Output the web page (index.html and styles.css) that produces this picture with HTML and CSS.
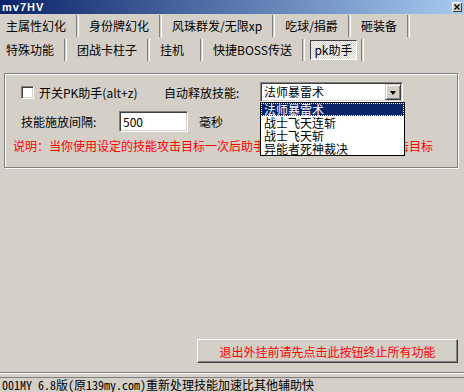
FILE: index.html
```html
<!DOCTYPE html>
<html lang="zh-CN">
<head>
    <meta charset="UTF-8">
    <title>mv7HV</title>
    <link rel="stylesheet" href="styles.css">
</head>
<body>
    <div class="window">
        <!-- Barra de titulo -->
        <div class="titlebar">
            <span class="title">mv7HV</span>
            <span class="close">
                <svg width="10" height="10" viewBox="0 0 10 10">
                    <path d="M2.5 2.5 L7.5 7.5 M7.5 2.5 L2.5 7.5" stroke="#000" stroke-width="1.4"/>
                </svg>
            </span>
        </div>

        <!-- Pestañas -->
        <div class="tabs">
            <div class="tab-row">
                <span class="tab">主属性幻化</span><i class="sep"></i>
                <span class="tab">身份牌幻化</span><i class="sep"></i>
                <span class="tab">风珠群发/无限xp</span><i class="sep"></i>
                <span class="tab">吃球/捐爵</span><i class="sep"></i>
                <span class="tab">砸装备</span><i class="sep"></i>
            </div>
            <div class="tab-row">
                <span class="tab">特殊功能</span><i class="sep"></i>
                <span class="tab">团战卡柱子</span><i class="sep"></i>
                <span class="tab tab-min">挂机</span><i class="sep"></i>
                <span class="tab">快捷BOSS传送</span><i class="sep"></i>
                <span class="tab tab-active">pk助手</span><i class="sep sep-tight"></i>
            </div>
        </div>

        <!-- Panel PK -->
        <div class="group">
            <div class="row">
                <label class="toggle"><span class="check"></span>开关PK助手(alt+z)</label>
                <span class="skill-label">自动释放技能:</span>
                <div class="select">
                    <span class="select-text">法师暴雷术</span>
                    <span class="drop-btn"><i class="arrow"></i></span>
                    <ul class="drop-list">
                        <li class="selected">法师暴雷术</li>
                        <li>战士飞天连斩</li>
                        <li>战士飞天斩</li>
                        <li>异能者死神裁决</li>
                    </ul>
                </div>
            </div>
            <div class="row row-gap">
                <span class="interval-label">技能施放间隔:</span>
                <span class="input">500</span>
                <span class="unit">毫秒</span>
            </div>
            <div class="note">说明：当你使用设定的技能攻击目标一次后助手会自动使用此技能持续攻击目标</div>
        </div>

        <div class="footer">
            <button class="quit">退出外挂前请先点击此按钮终止所有功能</button>
        </div>

        <div class="statusbar">
            <span class="status-panel">001MY 6.8版(原139my.com)重新处理技能加速比其他辅助快</span>
        </div>
    </div>
</body>
</html>
```

FILE: styles.css
```css
body {
    margin: 0;
    padding: 0;
    background: #d4d0c8;
    font-family: "Noto Sans CJK SC", sans-serif;
    font-size: 12px;
    color: #000;
}
.window {
    width: 464px;
    height: 392px;
    display: flex;
    flex-direction: column;
    overflow: hidden;
}

/* barra de titulo */
.titlebar {
    height: 14px;
    background: linear-gradient(to right, #0a246a, #a6caf0);
    display: flex;
    align-items: flex-start;
    justify-content: space-between;
}
.title {
    color: #fff;
    font-family: "Liberation Sans", sans-serif;
    font-weight: bold;
    font-size: 11px;
    line-height: 11px;
    letter-spacing: 1px;
    padding: 2px 0 0 2px;
}
.close {
    width: 10px;
    height: 10px;
    margin: 2px 2px 0 0;
    background: #d4d0c8;
    box-shadow: inset 1px 1px #fff, inset -1px -1px #404040;
    display: flex;
}

/* pestañas */
.tab-row {
    height: 24px;
    display: flex;
    align-items: center;
    padding-left: 6px;
    line-height: 14px;
    white-space: nowrap;
}
.tab-min {
    min-width: 30px;
}
.sep {
    width: 1px;
    height: 22px;
    border-left: 1px solid #808080;
    border-right: 1px solid #fff;
    margin: 0 10px;
}
.sep-tight {
    margin-left: 4px;
}
.tab-active {
    width: 45px;
    height: 18px;
    margin-left: -5px;
    line-height: 18px;
    text-align: center;
    border: 1px solid;
    border-color: #404040 #fff #fff #404040;
    background: repeating-conic-gradient(#fff 0 25%, #d4d0c8 0 50%) 0 0 / 2px 2px;
}

/* caja de grupo */
.group {
    margin: 11px 6px 0 4px;
    border: 1px solid #808080;
    box-shadow: inset 1px 1px #fff, 1px 1px #fff;
    padding: 8px 0 14px 16px;
}
.row {
    display: flex;
    align-items: center;
    height: 20px;
}
.row-gap {
    margin-top: 9px;
    height: 21px;
}
.toggle {
    width: 143px;
    display: flex;
    align-items: center;
    white-space: nowrap;
}
.check {
    width: 11px;
    height: 11px;
    margin-right: 5px;
    background: #fff;
    border: 1px solid;
    border-color: #808080 #fff #fff #808080;
    box-shadow: inset 1px 1px #404040, inset -1px -1px #d4d0c8;
}
.skill-label {
    width: 96px;
}
.select {
    position: relative;
    width: 141px;
    height: 18px;
    border: 1px solid;
    border-color: #808080 #fff #fff #808080;
    box-shadow: inset 1px 1px #404040, inset -1px -1px #d4d0c8;
    background: #fff;
    display: flex;
    align-items: center;
    justify-content: space-between;
}
.select-text {
    padding-left: 3px;
    line-height: 14px;
}
.drop-btn {
    width: 14px;
    height: 14px;
    margin-right: 1px;
    background: #d4d0c8;
    border: 1px solid;
    border-color: #d4d0c8 #404040 #404040 #d4d0c8;
    box-shadow: inset 1px 1px #fff, inset -1px -1px #808080;
    display: flex;
    align-items: center;
    justify-content: center;
}
.arrow {
    width: 0;
    height: 0;
    border-left: 3.5px solid transparent;
    border-right: 3.5px solid transparent;
    border-top: 4px solid #000;
    margin-top: 1px;
}
.drop-list {
    position: absolute;
    left: -1px;
    top: 19px;
    width: 143px;
    margin: 0;
    padding: 0;
    list-style: none;
    background: #fff;
    border: 1px solid #000;
    z-index: 2;
}
.drop-list li {
    height: 13px;
    line-height: 13px;
    padding-left: 3px;
    white-space: nowrap;
}
.drop-list li.selected {
    background: #0a246a;
    color: #fff;
    outline: 1px dotted #ffe;
    outline-offset: -1px;
}
.interval-label {
    width: 98px;
}
.input {
    width: 64px;
    height: 19px;
    line-height: 19px;
    padding-left: 3px;
    background: #fff;
    border: 1px solid;
    border-color: #808080 #fff #fff #808080;
    box-shadow: inset 1px 1px #404040, inset -1px -1px #d4d0c8;
}
.unit {
    margin-left: 11px;
}
.note {
    margin: 7px 0 0 -8px;
    color: #f00;
    line-height: 14px;
    white-space: nowrap;
}

/* boton de salida */
.footer {
    margin-top: auto;
    display: flex;
    justify-content: flex-end;
    padding: 0 6px 9px 0;
}
.quit {
    width: 261px;
    height: 24px;
    padding: 0;
    font-family: inherit;
    font-size: 12px;
    color: #f00;
    background: #d4d0c8;
    border: 1px solid;
    border-color: #fff #404040 #404040 #fff;
    box-shadow: inset -1px -1px #808080;
}

/* barra de estado */
.statusbar {
    height: 20px;
    border-top: 1px solid #808080;
    box-shadow: inset 0 1px #fff;
    padding-top: 4px;
    box-sizing: border-box;
}
.status-panel {
    display: block;
    border-top: 1px solid #808080;
    padding-left: 2px;
    font-family: "Noto Sans Mono CJK SC", "Liberation Mono", monospace;
    line-height: 14px;
    white-space: nowrap;
}
```
